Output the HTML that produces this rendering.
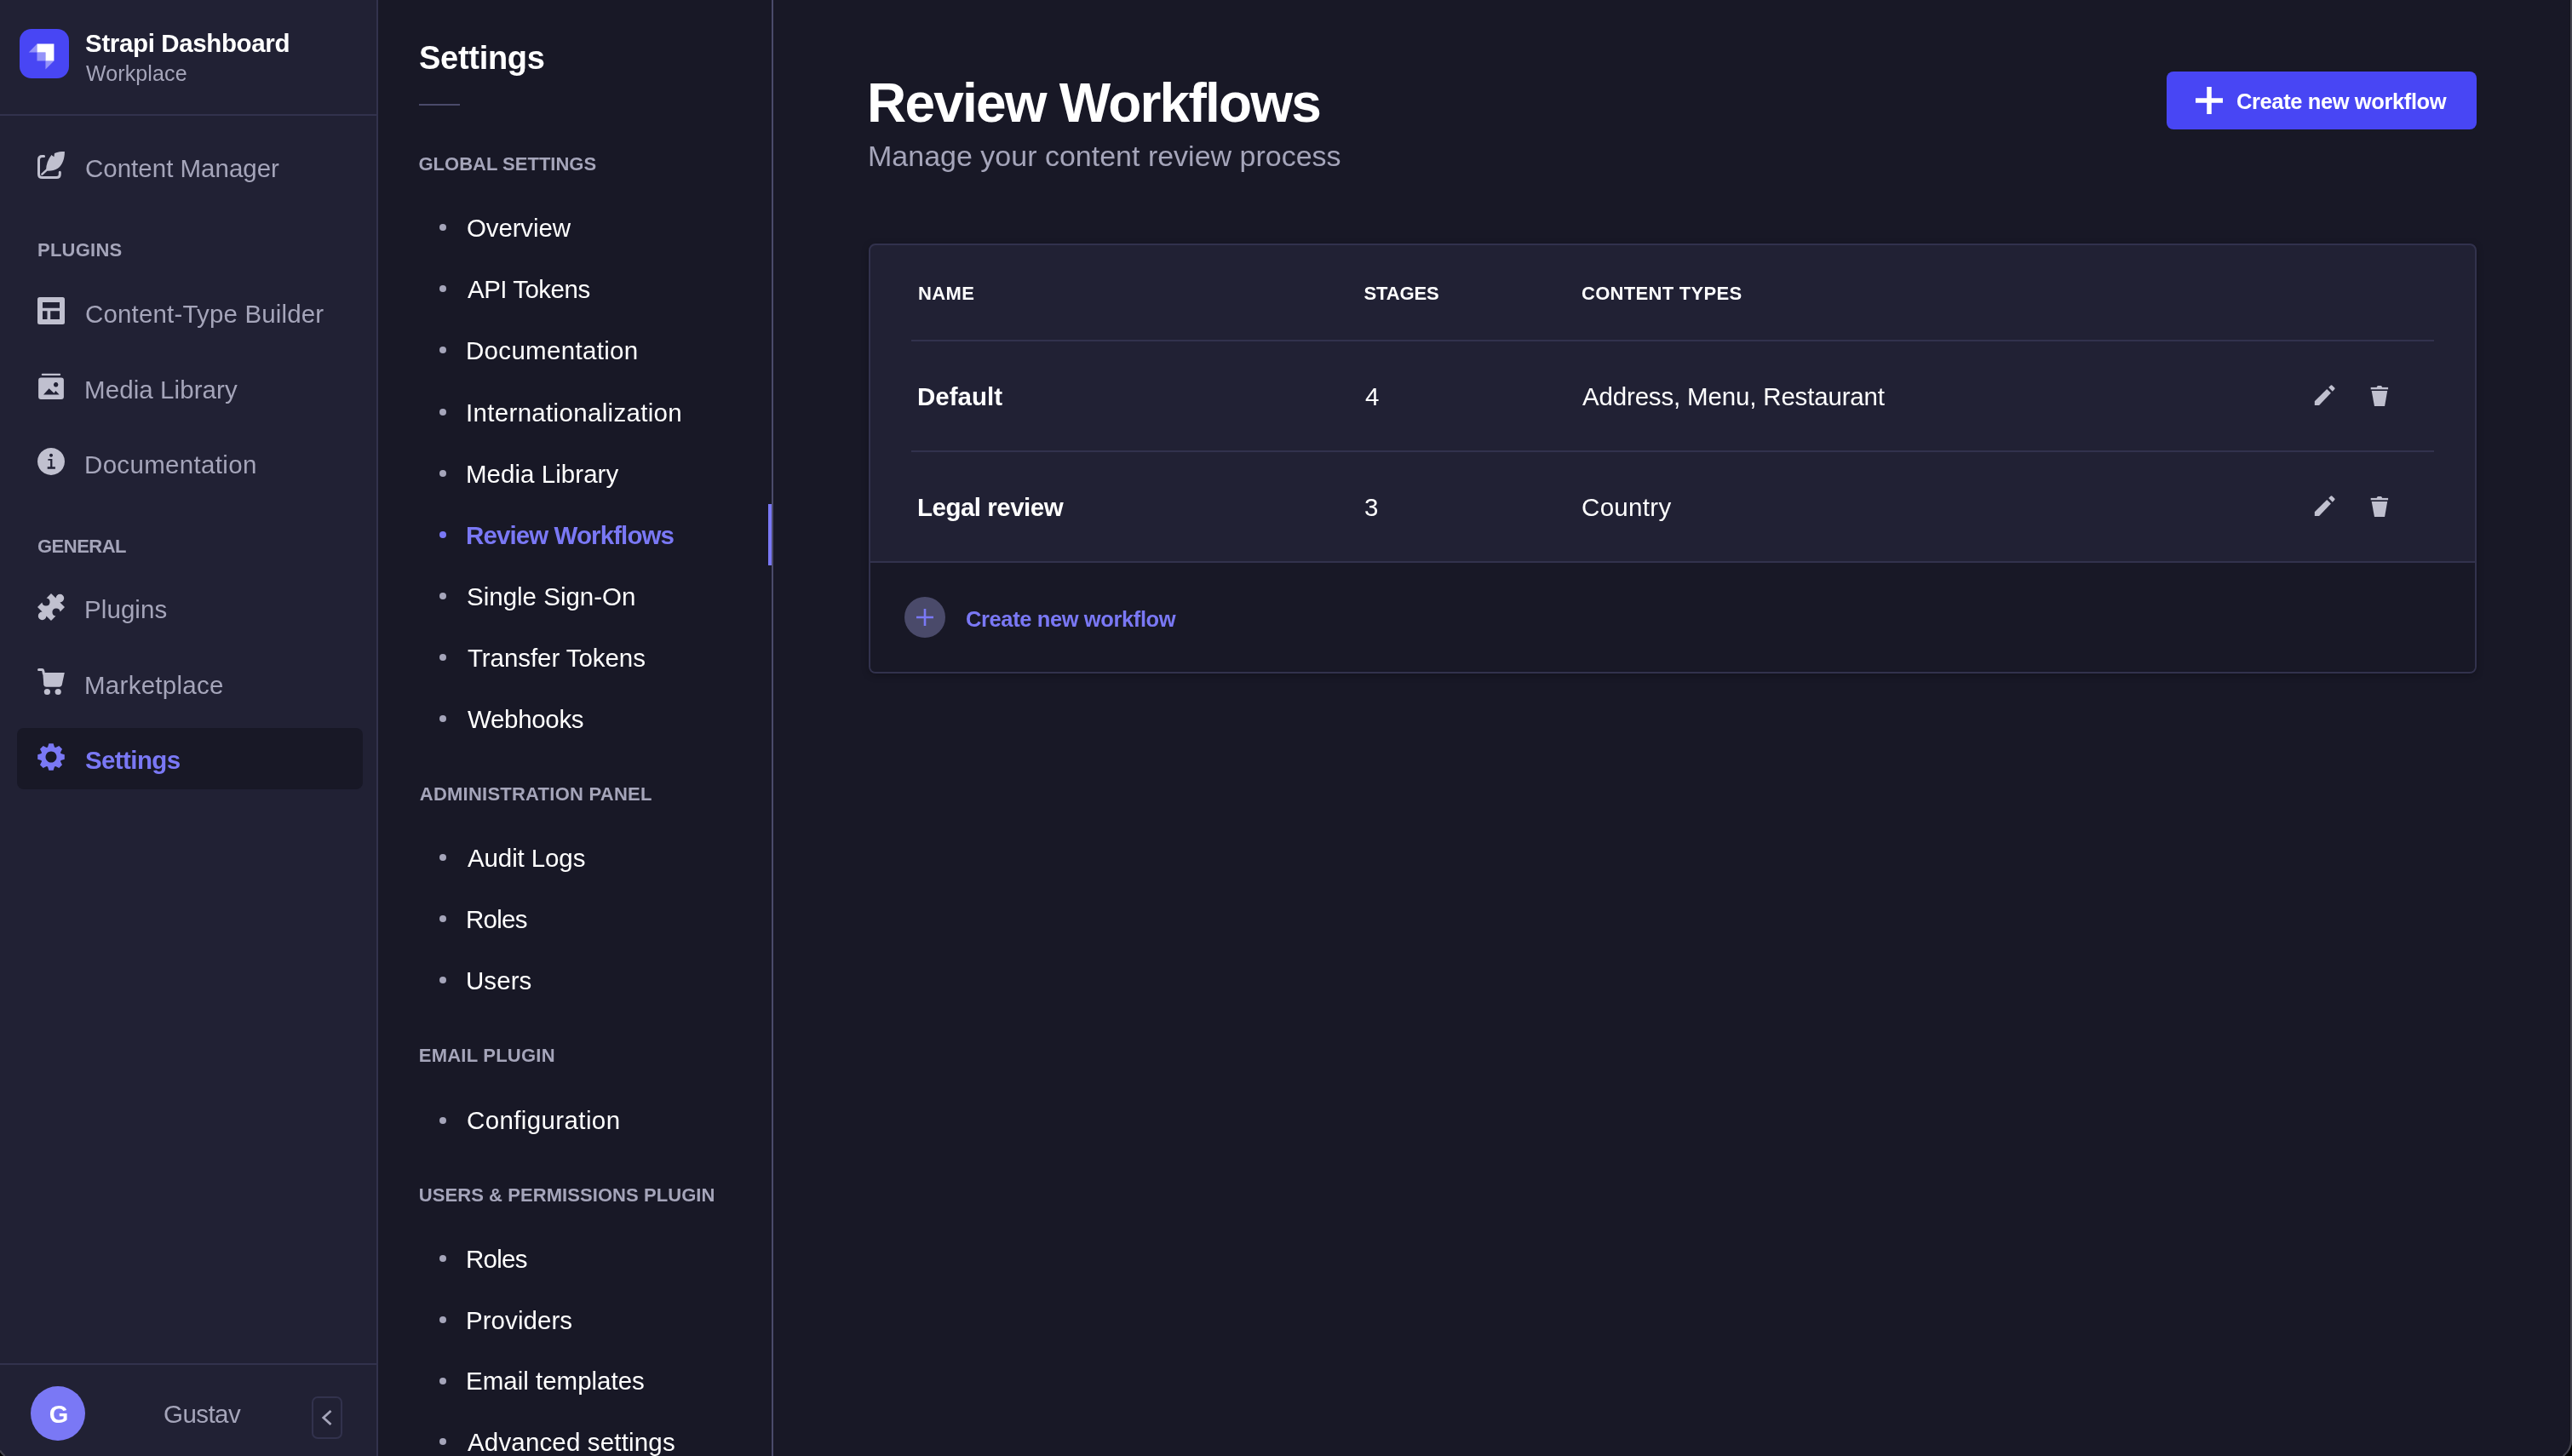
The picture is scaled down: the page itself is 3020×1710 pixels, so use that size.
<!DOCTYPE html>
<html><head><meta charset="utf-8"><style>
*{margin:0;padding:0;box-sizing:border-box}
html,body{width:3020px;height:1710px;overflow:hidden;background:#181826;font-family:"Liberation Sans",sans-serif}
.abs{position:absolute}
.t{position:absolute;white-space:nowrap;line-height:1}
.bul{position:absolute;left:516px;width:8px;height:8px;border-radius:50%}
@media (max-width:1600px){html{zoom:0.5}}
</style></head><body>
<div class="abs" style="left:0;top:0;width:442px;height:1710px;background:#212134"></div>
<div class="abs" style="left:442px;top:0;width:2px;height:1710px;background:#32324d"></div>
<div class="abs" style="left:0;top:134px;width:442px;height:2px;background:#32324d"></div>
<div class="abs" style="left:0;top:1601px;width:442px;height:2px;background:#32324d"></div>
<div class="abs" style="left:20px;top:855px;width:406px;height:72px;border-radius:8px;background:#181826"></div>
<div class="abs" style="left:36px;top:1628px;width:64px;height:64px;border-radius:50%;background:#7a78f5"></div>
<div class="abs" style="left:366px;top:1640px;width:36px;height:50px;border-radius:7px;border:2px solid #32324d"></div>
<div class="abs" style="left:906px;top:0;width:2px;height:1710px;background:#4a4a6a"></div>
<div class="abs" style="left:902px;top:592px;width:4px;height:72px;background:#7a78f5"></div>
<div class="abs" style="left:492px;top:122px;width:48px;height:2px;background:#4a4a6a"></div>
<div class="abs" style="left:2544px;top:84px;width:364px;height:68px;border-radius:8px;background:#4846f4"></div>
<svg class="abs" style="left:2578px;top:102px" width="32" height="32" viewBox="0 0 32 32"><path d="M16 0V32M0 16H32" stroke="#fff" stroke-width="5.5"/></svg>
<div class="abs" style="left:1020px;top:286px;width:1888px;height:505px;border-radius:8px;border:2px solid #32324d;background:#212134;overflow:hidden;box-shadow:0 2px 8px rgba(0,0,0,.25)">
  <div class="abs" style="left:0;top:371px;width:1884px;height:130px;background:#181826;border-top:2px solid #32324d"></div>
</div>
<div class="abs" style="left:1070px;top:399px;width:1788px;height:2px;background:#32324d"></div>
<div class="abs" style="left:1070px;top:529px;width:1788px;height:2px;background:#32324d"></div>
<div class="abs" style="left:1062px;top:701px;width:48px;height:48px;border-radius:50%;background:#4a4a6a"></div>
<svg class="abs" style="left:1076px;top:715px" width="20" height="20" viewBox="0 0 20 20"><path d="M10 0V20M0 10H20" stroke="#7a78f5" stroke-width="2.6"/></svg>
<svg class="abs" style="left:2700px;top:440px" width="120" height="40" viewBox="2700 440 120 40">
 <g fill="#c0c0cf">
  <path d="M2717.8 471.3L2732.2 456.9L2736.9 461.55L2723.1 476.1H2717.8Z"/>
  <path d="M2734.2 455.1L2736.8 452.5Q2737.5 451.8 2738.2 452.5L2741.3 455.6Q2742 456.3 2741.3 457L2738.8 459.8Z"/>
  <rect x="2783.7" y="454.9" width="20.4" height="2.4"/>
  <path d="M2790.6 455L2791.3 453.4Q2791.6 453 2792.2 453H2795.6Q2796.2 453 2796.5 453.4L2797.2 455Z"/>
  <path d="M2784.7 459H2803.2L2800.1 477.1H2788Z"/>
 </g></svg>
<svg class="abs" style="left:2700px;top:570px" width="120" height="40" viewBox="2700 440 120 40">
 <g fill="#c0c0cf">
  <path d="M2717.8 471.3L2732.2 456.9L2736.9 461.55L2723.1 476.1H2717.8Z"/>
  <path d="M2734.2 455.1L2736.8 452.5Q2737.5 451.8 2738.2 452.5L2741.3 455.6Q2742 456.3 2741.3 457L2738.8 459.8Z"/>
  <rect x="2783.7" y="454.9" width="20.4" height="2.4"/>
  <path d="M2790.6 455L2791.3 453.4Q2791.6 453 2792.2 453H2795.6Q2796.2 453 2796.5 453.4L2797.2 455Z"/>
  <path d="M2784.7 459H2803.2L2800.1 477.1H2788Z"/>
 </g></svg>

<svg class="abs" style="left:0;top:0" width="444" height="1710" viewBox="0 0 444 1710">
 <!-- logo -->
 <g transform="translate(23,34) scale(0.09667)">
  <rect x="0" y="0" width="600" height="600" rx="145" fill="#4846f4"/>
  <path d="M212 182H418V388H315V285H212Z" fill="#fff"/>
  <path d="M212 285H315V388H212Z M111 285L212 182V285Z M315 388H418L315 491Z" fill="#fff" opacity=".42"/>
 </g>
 <!-- content manager -->
 <g transform="translate(44,178)" fill="#c0c0cf" stroke="#c0c0cf">
  <path d="M7.6 5.55H5.5Q1.5 5.55 1.5 9.55V26.45Q1.5 30.45 5.5 30.45H22.3Q26.3 30.45 26.3 26.45V24.2" fill="none" stroke-width="3" stroke-linecap="round"/>
  <path d="M5.4 26.6L10.8 21.6" fill="none" stroke-width="2.6" stroke-linecap="round"/>
  <path d="M10 22.6C10.2 15 12.5 9 16.4 4.1L19.4 6.3L20 2C24 0.3 28 0 31.9 0C32 8 29.5 15.5 24.2 19.6C20 22.6 15 22.9 10 22.6Z" stroke="none"/>
 </g>
 <!-- ctb -->
 <g transform="translate(44,349)" fill="#c0c0cf">
  <path fill-rule="evenodd" d="M2.5 0H29.5Q32 0 32 2.5V29.5Q32 32 29.5 32H2.5Q0 32 0 29.5V2.5Q0 0 2.5 0Z M6 6V12.7H26V6Z M6 16.2V26H11.5V16.2Z M15.2 16.2V26H26V16.2Z"/>
 </g>
 <!-- media library -->
 <g transform="translate(44,437)" fill="#c0c0cf">
  <rect x="4.7" y="1.8" width="22.5" height="2.3" rx="1.15"/>
  <path fill-rule="evenodd" d="M4.1 6.6H27.9Q30.9 6.6 30.9 9.6V28.9Q30.9 31.9 27.9 31.9H4.1Q1.1 31.9 1.1 28.9V9.6Q1.1 6.6 4.1 6.6Z M21.65 12.1A2.7 2.7 0 1 0 21.651 12.1Z M7 26.6L13.6 19.2L19.4 24.8L21.35 22L25.6 26.6Z"/>
 </g>
 <!-- documentation -->
 <g transform="translate(44,526)" fill="#c0c0cf">
  <path fill-rule="evenodd" d="M16 0A16 16 0 1 1 15.99 0Z M16 6.8A2 2 0 1 0 16.01 6.8Z M12.4 12.9H17.4V22.3H20.9V24.8H11.7V22.3H15.15V14.85H12.4Z"/>
 </g>
 <!-- plugins -->
 <g transform="translate(44,697)" fill="#c0c0cf">
  <path d="M16 0L21.6 5.6A4.8 4.8 0 1 1 26.4 10.4L32 16L26.6 21.4A4.6 4.6 0 1 0 21.4 26.6L16 32L10.4 26.4A4.8 4.8 0 1 1 5.6 21.6L0 16L5.4 10.6A4.6 4.6 0 1 0 10.6 5.4Z"/>
 </g>
 <!-- marketplace -->
 <g transform="translate(44,784)" fill="#c0c0cf">
  <path d="M1.5 2.5H5.2Q6.6 2.5 6.9 4.6L7.3 7" fill="none" stroke="#c0c0cf" stroke-width="3" stroke-linecap="round"/>
  <path d="M6.3 6H31.8L28.7 20.6Q28.1 22.7 26 22.7H10.3Q8 22.7 7.3 20.2Z"/>
  <circle cx="11.4" cy="28.5" r="3.6"/><circle cx="24.2" cy="28.5" r="3.6"/>
 </g>
 <!-- settings gear -->
 <path fill="#7a78f5" fill-rule="evenodd" d="M56.03 877.46 L57.36 873.22 L62.64 873.22 L63.97 877.46 L65.35 878.03 L69.29 875.97 L73.03 879.71 L70.97 883.65 L71.54 885.03 L75.78 886.36 L75.78 891.64 L71.54 892.97 L70.97 894.35 L73.03 898.29 L69.29 902.03 L65.35 899.97 L63.97 900.54 L62.64 904.78 L57.36 904.78 L56.03 900.54 L54.65 899.97 L50.71 902.03 L46.97 898.29 L49.03 894.35 L48.46 892.97 L44.22 891.64 L44.22 886.36 L48.46 885.03 L49.03 883.65 L46.97 879.71 L50.71 875.97 L54.65 878.03Z M60 882.5A6.5 6.5 0 1 0 60.01 882.5Z"/>
 <!-- collapse chevron -->
 <path d="M388.5 1657L379.8 1665L388.5 1673" fill="none" stroke="#a5a5ba" stroke-width="2.8"/>
</svg>

<div class="abs" style="left:3017px;top:0;width:1px;height:1710px;background:#15151f"></div>
<div class="abs" style="left:3018px;top:0;width:2px;height:1710px;background:#45454f"></div>
<svg class="abs" style="left:0;top:1690px" width="30" height="20" viewBox="0 1690 30 20"><path d="M0 1705.45V1710H4.15A25 25 0 0 1 0 1705.45Z" fill="#000"/><path d="M5.74 1710A24 24 0 0 1 0 1703.64" fill="none" stroke="#45454f" stroke-width="2"/></svg>
<svg class="abs" style="left:2980px;top:1670px" width="40" height="40" viewBox="2980 1670 40 40"><path d="M3020 1691V1710H3011.25A25 25 0 0 0 3020 1691Z" fill="#000"/><path d="M3019 1691A24 24 0 0 1 3009.66 1710" fill="none" stroke="#45454f" stroke-width="2"/></svg>
<div class="bul" style="top:263.25px;background:#a5a5ba"></div><div class="bul" style="top:335.25px;background:#a5a5ba"></div><div class="bul" style="top:407.25px;background:#a5a5ba"></div><div class="bul" style="top:480.25px;background:#a5a5ba"></div><div class="bul" style="top:552.25px;background:#a5a5ba"></div><div class="bul" style="top:624.25px;background:#7a78f5"></div><div class="bul" style="top:696.25px;background:#a5a5ba"></div><div class="bul" style="top:768.25px;background:#a5a5ba"></div><div class="bul" style="top:840.25px;background:#a5a5ba"></div><div class="bul" style="top:1002.75px;background:#a5a5ba"></div><div class="bul" style="top:1074.75px;background:#a5a5ba"></div><div class="bul" style="top:1147.25px;background:#a5a5ba"></div><div class="bul" style="top:1311.5px;background:#a5a5ba"></div><div class="bul" style="top:1474.25px;background:#a5a5ba"></div><div class="bul" style="top:1545.75px;background:#a5a5ba"></div><div class="bul" style="top:1617.5px;background:#a5a5ba"></div><div class="bul" style="top:1689.25px;background:#a5a5ba"></div>
<div class="abs" style="left:0;top:0;width:3020px;height:1710px;will-change:transform"><div class="t" style="left:100.1px;top:36.3px;font-size:29.5px;color:#ffffff;font-weight:700;letter-spacing:-0.37px">Strapi Dashboard</div><div class="t" style="left:101.1px;top:73.7px;font-size:25px;color:#a5a5ba;letter-spacing:0.1px">Workplace</div><div class="t" style="left:100px;top:182.5px;font-size:29.5px;color:#a5a5ba">Content Manager</div><div class="t" style="left:44px;top:282.5px;font-size:22px;color:#a5a5ba;font-weight:700;letter-spacing:0.25px">PLUGINS</div><div class="t" style="left:100px;top:354px;font-size:29.5px;color:#a5a5ba;letter-spacing:0.16px">Content-Type Builder</div><div class="t" style="left:99px;top:442.5px;font-size:29.5px;color:#a5a5ba;letter-spacing:0.08px">Media Library</div><div class="t" style="left:99px;top:531px;font-size:29.5px;color:#a5a5ba;letter-spacing:0.33px">Documentation</div><div class="t" style="left:44px;top:631px;font-size:22px;color:#a5a5ba;font-weight:700;letter-spacing:-0.5px">GENERAL</div><div class="t" style="left:99px;top:701px;font-size:29.5px;color:#a5a5ba;letter-spacing:0.08px">Plugins</div><div class="t" style="left:99px;top:789.5px;font-size:29.5px;color:#a5a5ba;letter-spacing:0.28px">Marketplace</div><div class="t" style="left:100px;top:877.5px;font-size:29.5px;color:#7a78f5;font-weight:700;letter-spacing:-0.61px">Settings</div><div class="t" style="left:57.7px;top:1647.4px;font-size:29px;color:#ffffff;font-weight:700">G</div><div class="t" style="left:192px;top:1646px;font-size:29.5px;color:#a5a5ba;letter-spacing:-0.55px">Gustav</div><div class="t" style="left:492px;top:49px;font-size:38px;color:#ffffff;font-weight:700;letter-spacing:-0.29px">Settings</div><div class="t" style="left:491.5px;top:182px;font-size:22px;color:#a5a5ba;font-weight:700">GLOBAL SETTINGS</div><div class="t" style="left:548px;top:253px;font-size:29.5px;color:#ffffff;letter-spacing:-0.14px">Overview</div><div class="t" style="left:549px;top:325px;font-size:29.5px;color:#ffffff;letter-spacing:-0.5px">API Tokens</div><div class="t" style="left:547px;top:397px;font-size:29.5px;color:#ffffff;letter-spacing:0.31px">Documentation</div><div class="t" style="left:547px;top:470px;font-size:29.5px;color:#ffffff;letter-spacing:0.32px">Internationalization</div><div class="t" style="left:547px;top:542px;font-size:29.5px;color:#ffffff;letter-spacing:0.04px">Media Library</div><div class="t" style="left:547px;top:614px;font-size:29.5px;color:#7a78f5;font-weight:700;letter-spacing:-0.9px">Review Workflows</div><div class="t" style="left:548px;top:686px;font-size:29.5px;color:#ffffff">Single Sign-On</div><div class="t" style="left:549px;top:758px;font-size:29.5px;color:#ffffff;letter-spacing:-0.07px">Transfer Tokens</div><div class="t" style="left:549px;top:830px;font-size:29.5px;color:#ffffff;letter-spacing:-0.32px">Webhooks</div><div class="t" style="left:492.75px;top:922px;font-size:22px;color:#a5a5ba;font-weight:700;letter-spacing:0.24px">ADMINISTRATION PANEL</div><div class="t" style="left:549px;top:992.5px;font-size:29.5px;color:#ffffff;letter-spacing:-0.11px">Audit Logs</div><div class="t" style="left:547px;top:1064.5px;font-size:29.5px;color:#ffffff;letter-spacing:-0.75px">Roles</div><div class="t" style="left:547px;top:1137px;font-size:29.5px;color:#ffffff;letter-spacing:0.06px">Users</div><div class="t" style="left:491.75px;top:1229px;font-size:22px;color:#a5a5ba;font-weight:700;letter-spacing:0.23px">EMAIL PLUGIN</div><div class="t" style="left:548px;top:1301.25px;font-size:29.5px;color:#ffffff;letter-spacing:0.38px">Configuration</div><div class="t" style="left:491.75px;top:1393.25px;font-size:22px;color:#a5a5ba;font-weight:700;letter-spacing:0.07px">USERS &amp; PERMISSIONS PLUGIN</div><div class="t" style="left:547px;top:1464px;font-size:29.5px;color:#ffffff;letter-spacing:-0.75px">Roles</div><div class="t" style="left:547px;top:1535.5px;font-size:29.5px;color:#ffffff;letter-spacing:0.06px">Providers</div><div class="t" style="left:547px;top:1607.25px;font-size:29.5px;color:#ffffff">Email templates</div><div class="t" style="left:549px;top:1679px;font-size:29.5px;color:#ffffff;letter-spacing:0.16px">Advanced settings</div><div class="t" style="left:1018px;top:88.5px;font-size:64px;color:#ffffff;font-weight:700;letter-spacing:-1.8px">Review Workflows</div><div class="t" style="left:1019px;top:165.5px;font-size:34px;color:#a5a5ba">Manage your content review process</div><div class="t" style="left:2626px;top:106.5px;font-size:25.5px;color:#ffffff;font-weight:700;letter-spacing:-0.39px">Create new workflow</div><div class="t" style="left:1078px;top:334px;font-size:22px;color:#ffffff;font-weight:700;letter-spacing:0.42px">NAME</div><div class="t" style="left:1601.5px;top:334px;font-size:22px;color:#ffffff;font-weight:700;letter-spacing:-0.15px">STAGES</div><div class="t" style="left:1857px;top:334px;font-size:22px;color:#ffffff;font-weight:700;letter-spacing:0.29px">CONTENT TYPES</div><div class="t" style="left:1077px;top:451px;font-size:29.5px;color:#ffffff;font-weight:700">Default</div><div class="t" style="left:1603px;top:451px;font-size:29.5px;color:#ffffff">4</div><div class="t" style="left:1858px;top:451px;font-size:29.5px;color:#ffffff;letter-spacing:-0.17px">Address, Menu, Restaurant</div><div class="t" style="left:1077px;top:581px;font-size:29.5px;color:#ffffff;font-weight:700;letter-spacing:-0.5px">Legal review</div><div class="t" style="left:1602px;top:581px;font-size:29.5px;color:#ffffff">3</div><div class="t" style="left:1857px;top:581px;font-size:29.5px;color:#ffffff;letter-spacing:0.33px">Country</div><div class="t" style="left:1134px;top:715px;font-size:25.5px;color:#7a78f5;font-weight:700;letter-spacing:-0.39px">Create new workflow</div></div>
</body></html>
